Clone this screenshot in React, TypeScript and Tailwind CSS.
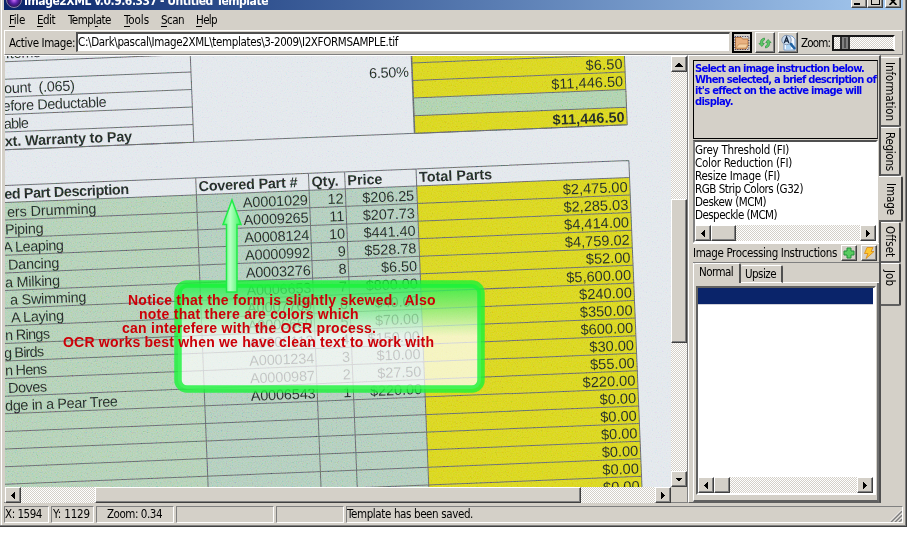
import React, { useLayoutEffect, useRef, useState } from "react";

const RAISED =
  "border border-t-white border-l-white border-r-[#404040] border-b-[#404040] shadow-[inset_-1px_-1px_0_#808080] bg-[#d4d0c8]";
const TRACK =
  "bg-[repeating-conic-gradient(#ffffff_0_25%,#d4d0c8_0_50%)] bg-[length:2px_2px]";

// A label whose letter spacing is fitted to a given length.
function Label({ w, children, className = "", vertical = false }: {
  w: number; children: string; className?: string; vertical?: boolean;
}) {
  const ref = useRef<HTMLSpanElement>(null);
  const [spacing, setSpacing] = useState(0);
  useLayoutEffect(() => {
    const el = ref.current;
    if (!el) return;
    el.style.letterSpacing = "0px";
    const range = document.createRange();
    range.selectNodeContents(el);
    const box = range.getBoundingClientRect();
    const s = (w - (vertical ? box.height : box.width)) / children.length;
    el.style.letterSpacing = s + "px";
    setSpacing(s);
  }, [w, children, vertical]);
  return (
    <span ref={ref} style={{ letterSpacing: spacing }} className={"inline-block shrink-0 whitespace-pre " + className}>
      {children}
    </span>
  );
}

function Arrow({ dir }: { dir: "left" | "right" | "up" | "down" }) {
  const d = { left: "M6 0v7L2 3.5z", right: "M2 0v7L6 3.5z", up: "M0 5.5h8L4 1.5z", down: "M0 1.5h8L4 5.5z" }[dir];
  return (
    <svg width="8" height="7" viewBox="0 0 8 7" shapeRendering="crispEdges">
      <path d={d} fill="#000" />
    </svg>
  );
}

function ScrollButton({ dir }: { dir: "left" | "right" | "up" | "down" }) {
  return (
    <div className={"flex h-4 w-4 shrink-0 items-center justify-center " + RAISED}>
      <Arrow dir={dir} />
    </div>
  );
}

const rows: [string, number, number, string, number, string, string][] = [
  ["ers Drumming", 7, 96.5, "A0001029", 12, "$206.25", "$2,475.00"],
  ["Piping", 5, 43.5, "A0009265", 11, "$207.73", "$2,285.03"],
  ["A Leaping", 3, 64, "A0008124", 10, "$441.40", "$4,414.00"],
  ["Dancing", 8, 59.5, "A0000992", 9, "$528.78", "$4,759.02"],
  ["a Milking", 5, 60, "A0003276", 8, "$6.50", "$52.00"],
  ["a Swimming", 10, 86.5, "A0006653", 7, "$800.00", "$5,600.00"],
  ["A Laying", 11, 64, "A0007769", 6, "$40.00", "$240.00"],
  ["n Rings", 5, 50, "A0006669", 5, "$70.00", "$350.00"],
  ["g Birds", 4, 44, "A0000112", 4, "$150.00", "$600.00"],
  ["n Hens", 5, 47, "A0001234", 3, "$10.00", "$30.00"],
  ["Doves", 8, 47, "A0000987", 2, "$27.50", "$55.00"],
  ["dge in a Pear Tree", 5, 118, "A0006543", 1, "$220.00", "$220.00"],
];
const PITCH = 17.6;
const LINE = "#62666a";

function Scan() {
  const rowLines = Array.from({ length: 19 }, (_, i) => 17 + i * PITCH);
  const upper = [-123.5, -106, -88.5, -71, -53.3, -35.6];
  return (
    <svg width="666" height="431" viewBox="5 56 666 431" className="block font-['Liberation_Sans',Arial,sans-serif]">
      <defs>
        <filter id="grain" x="0" y="0" width="100%" height="100%">
          <feTurbulence type="fractalNoise" baseFrequency="0.8" numOctaves="2" seed="4" />
          <feColorMatrix values="1.8 0 0 0 -0.4  0 1.8 0 0 -0.4  0 0 1.8 0 -0.4  0 0 0 0 1" />
        </filter>
        <linearGradient id="glass" x1="0" y1="0" x2="0" y2="1">
          <stop offset="0" stopColor="#20f048" stopOpacity="0.85" />
          <stop offset="0.2" stopColor="#70f080" stopOpacity="0.75" />
          <stop offset="0.5" stopColor="#ffffff" stopOpacity="0.72" />
          <stop offset="1" stopColor="#ffffff" stopOpacity="0.72" />
        </linearGradient>
        <linearGradient id="shaft" x1="0" y1="0" x2="1" y2="0">
          <stop offset="0" stopColor="#54f870" />
          <stop offset="0.4" stopColor="#b8ffc4" />
          <stop offset="1" stopColor="#38f45c" />
        </linearGradient>
        <filter id="soft"><feGaussianBlur stdDeviation="0.7" /></filter>
      </defs>
      <rect x="5" y="56" width="666" height="431" fill="#e1e6eb" />
      <g transform="translate(195.7 177.8) rotate(-2.3)" fontSize="14.4" fill="#1c2420">
        <rect x="-220" y="17" width="220" height="330" fill="#b0ceb4" />
        <rect x="0" y="17" width="220.5" height="330" fill="#afcbba" />
        <rect x="220.5" y="17" width="213" height="330" fill="#d8d41a" />
        <rect x="220.5" y="-130" width="213" height="94.4" fill="#d8d41a" />
        <rect x="220.5" y="-71" width="213" height="17.7" fill="#abcfaa" />
        <g stroke={LINE} strokeWidth="1">
          {rowLines.map((v) => <path key={v} d={`M-220 ${v}H433.5`} />)}
          <path d="M-220 0H433.5M0 0V340M112.8 0V340M149 0V340M220.5 0V340M433.5 0V340" />
          <path d="M-0.5 -130V-35.6M433.3 -130V-35.6M-220 -35.6H433.3" />
          <path d="M220.5 -130V-35.6" strokeWidth="1.6" />
          {upper.map((v) => <path key={v} d={`M-220 ${v}H-0.5M220.5 ${v}H433.3`} />)}
        </g>
        {rows.map(([name, x0, x1, part, qty, price, total], i) => {
          const v = 31.5 + i * PITCH;
          const u0 = x0 - 195.7 - v * 0.04;
          return (
            <g key={part}>
              <text x={u0} y={v} textLength={x1 - x0}>{name}</text>
              <text x="111.2" y={v} textAnchor="end" textLength="65">{part}</text>
              <text x="147" y={v} textAnchor="end">{qty}</text>
              <text x="217.6" y={v} textAnchor="end">{price}</text>
              <text x="431.2" y={v} textAnchor="end" fontSize="14.6">{total}</text>
            </g>
          );
        })}
        {[12, 13, 14, 15, 16, 17].map((i) => (
          <text key={i} x="431.2" y={31.5 + i * PITCH} textAnchor="end" fontSize="14.6">$0.00</text>
        ))}
        <g fontWeight="bold">
          <text x="-192" y="13.5" textLength="125">ed Part Description</text>
          <text x="2.5" y="13.5" textLength="99">Covered Part #</text>
          <text x="115.5" y="13.5" textLength="27">Qty.</text>
          <text x="151.5" y="13.5" textLength="35">Price</text>
          <text x="223.3" y="13.2" textLength="73">Total Parts</text>
          <text x="-189.3" y="-39.2" textLength="127.500">xt. Warranty to Pay</text>
          <text x="431" y="-38.6" textAnchor="end" textLength="72">$11,446.50</text>
        </g>
        <text x="-185" y="-127" textLength="35">Items</text>
        <text x="-188" y="-92.2" textLength="71" xmlSpace="preserve">ount  (.065)</text>
        <text x="-190" y="-74.6" textLength="104">efore Deductable</text>
        <text x="-189.500" y="-56.700" textLength="25">able</text>
        <text x="217.300" y="-92.500" textAnchor="end" textLength="40">6.50%</text>
        <text x="431" y="-91.800" textAnchor="end" textLength="37">$6.50</text>
        <text x="431" y="-74.300" textAnchor="end" textLength="72">$11,446.50</text>
      </g>
      <rect x="5" y="56" width="666" height="431" filter="url(#grain)" className="mix-blend-soft-light" opacity="0.5" />
      <rect x="178" y="284" width="303" height="105" rx="9" fill="url(#glass)" />
      <rect x="178" y="284" width="303" height="105" rx="9" fill="none" stroke="#18f238" strokeOpacity="0.8" strokeWidth="7.500" filter="url(#soft)" />
      <path d="M232 200L241 224.500H237V292H226.500V224.500H223Z" fill="url(#shaft)" stroke="#20ec48" strokeWidth="1.500" />
      <g fontSize="14" fontWeight="bold" fill="#cc0008">
        <text x="128" y="305" textLength="307.500" xmlSpace="preserve">Notice that the form is slightly skewed.  Also</text>
        <text x="139" y="319" textLength="219.500">note that there are colors which</text>
        <text x="122" y="333" textLength="254">can interefere with the OCR process.</text>
        <text x="63" y="347" textLength="371">OCR works best when we have clean text to work with</text>
      </g>
    </svg>
  );
}

function MenuItem({ text, w, mark, className }: { text: string; w: number; mark: number; className: string }) {
  return (
    <div className={"flex flex-col " + className}>
      <Label w={w}>{text}</Label>
      <svg width={w} height="1" className="-mt-px"><rect x={(mark * w) / text.length} width={mark ? 3 : 6} height="1" /></svg>
    </div>
  );
}

function SideTab({ text, w, className }: { text: string; w: number; className: string }) {
  return (
    <div className={"flex shrink-0 items-start rounded-tr-[2px] rounded-br-[2px] border-t border-t-white border-r-2 border-r-[#404040] border-b-2 border-b-[#606060] " + className}>
      <Label w={w} vertical className="leading-[14px] [writing-mode:vertical-rl]">{text}</Label>
    </div>
  );
}

const SUNK = "border border-t-[#808080] border-l-[#808080] border-r-white border-b-white";

export default function App() {
  return (
    <div className="h-[539px] w-[907px] overflow-hidden bg-white font-['DejaVu_Sans_Condensed','DejaVu_Sans',Tahoma,sans-serif] text-[11.5px] leading-[13px] text-black">
      <div className="flex h-[527px] w-[907px] border-r border-b border-[#404040] bg-[#d4d0c8]">
        <div className="w-full border-r border-b border-[#808080] border-r-[#808080] shadow-[inset_1px_0_0_#d4d0c8,inset_2px_0_0_#fff] pl-1">
          <div className="flex h-[10px] w-[899px] items-start overflow-hidden bg-linear-to-r from-[#0a246a] to-[#a6caf0]">
            <svg width="16" height="16" viewBox="0 0 16 16" className="-mt-[8px] ml-[2px]">
              <defs><radialGradient id="orb"><stop offset="0" stopColor="#d070ff" /><stop offset="0.5" stopColor="#5a20a8" /><stop offset="1" stopColor="#20104c" /></radialGradient></defs>
              <circle cx="8" cy="8" r="7.500" fill="url(#orb)" stroke="#8a80a8" />
            </svg>
            <Label w={244} className="-mt-[5px] ml-[2px] text-[12px] font-bold text-white">Image2XML v.0.9.6.337 - Untitled Template</Label>
            <div className="-mt-[6px] ml-auto mr-[2px] flex">
              <div className={"flex h-[14px] w-4 items-end justify-center pb-[2px] " + RAISED}><div className="mr-1 h-[2px] w-[6px] bg-black" /></div>
              <div className={"mr-[2px] flex h-[14px] w-4 items-end justify-center pb-[2px] " + RAISED}><div className="h-[9px] w-[9px] border border-t-2 border-black" /></div>
              <div className={"flex h-[14px] w-4 items-end justify-center pb-[2px] " + RAISED}>
                <svg width="8" height="7" viewBox="0 0 8 7"><path d="M.5 0l7 7M7.500 0l-7 7" stroke="#000" strokeWidth="1.700" /></svg>
              </div>
            </div>
          </div>
          <div className="flex h-5 pt-1">
            <MenuItem text="File" w={16} mark={0} className="ml-[5px]" />
            <MenuItem text="Edit" w={18} mark={0} className="ml-3" />
            <MenuItem text="Template" w={43} mark={5} className="ml-[13px]" />
            <MenuItem text="Tools" w={25} mark={0} className="ml-[13px]" />
            <MenuItem text="Scan" w={23} mark={0} className="ml-3" />
            <MenuItem text="Help" w={21} mark={0} className="ml-3" />
          </div>
          <div className="flex h-[25px] w-[899px] items-start border-t border-r border-b border-l border-t-white border-r-[#808080] border-b-[#808080] border-l-white">
            <Label w={66} className="mt-[6px] ml-[4px]">Active Image:</Label>
            <div className="ml-[1px] mt-[1px] flex h-5 w-[654px] items-center border-t-2 border-l-2 border-r border-b border-t-[#505050] border-l-[#505050] border-r-[#d4d0c8] border-b-[#d4d0c8] bg-white">
              <Label w={320} className="-mt-px">C:\Dark\pascal\Image2XML\templates\3-2009\I2XFORMSAMPLE.tif</Label>
            </div>
            <div className="ml-[2px] mt-px flex h-[21px] w-5 items-center justify-center border-2 border-black bg-[#d4d0c8]">
              <svg width="16" height="16" viewBox="0 0 16 16">
                <path d="M1.500 2.500h6l1 1.500h5.500v7l-2 3H1.500z" fill="#e8b080" stroke="#b87840" />
                <path d="M2 13l3-4h9l-2 4z" fill="#f4cfa4" stroke="#c08850" strokeWidth=".7" />
                <rect x=".8" y="1.500" width="14" height="13" fill="none" stroke="#302850" strokeDasharray="1 1.500" />
              </svg>
            </div>
            <div className={"ml-[3px] mt-px flex h-[21px] w-5 items-center justify-center " + RAISED}>
              <svg width="14" height="14" viewBox="0 0 14 14" stroke="#238a38" strokeWidth=".6" fill="#5cc866">
                <path d="M6.500 2C3.500 2.500 2 4.500 2.300 7.500H.8L4 10.500l2.300-3H4.800C4.600 5.500 5 4.500 6.500 4z" />
                <path d="M7.500 12c3-.5 4.500-2.500 4.200-5.500h1.500L10 3.500l-2.300 3h1.500c.2 2-.2 3-1.700 3.500z" />
              </svg>
            </div>
            <div className={"ml-[3px] mt-px flex h-[21px] w-5 items-center justify-center " + RAISED}>
              <svg width="17" height="17" viewBox="0 0 17 17">
                <path d="M4 2h8l3 3v11H4z" fill="#f4f8ff" stroke="#78a0d0" />
                <path d="M6 10h7M6 12h7M6 14h5" stroke="#68b0e8" />
                <path d="M10 9l5 6" stroke="#2060a0" strokeWidth="2.600" />
                <circle cx="6.500" cy="6" r="4.700" fill="#c8daf0" fillOpacity=".9" stroke="#8898b0" />
                <path d="M4.300 9l2.300-6 2.200 6M5 7h3.200" stroke="#182840" strokeWidth="1.300" fill="none" />
              </svg>
            </div>
            <Label w={29} className="ml-[3px] mt-[6px]">Zoom:</Label>
            <div className={"ml-[2px] mt-[4px] flex h-4 w-[63px] border-2 border-[#181818] border-r-white border-b-[#181818] " + TRACK}>
              <div className="ml-[6px] flex w-[10px] items-center justify-center border-x-2 border-[#303030] bg-[#808080]"><div className="h-[10px] w-[2px] bg-[#505050]" /></div>
            </div>
          </div>
          <div className="flex h-[448px]">
            <div className="w-[684px] border-t border-r border-b border-t-white border-r-[#808080] border-b-[#808080]">
              <div className="flex h-[431px] pl-px">
                <div className="h-[431px] w-[666px] overflow-hidden"><Scan /></div>
                <div className={"flex w-4 flex-col " + TRACK}>
                  <ScrollButton dir="up" />
                  <div className={"mt-[127px] h-[144px] w-4 " + RAISED} />
                  <div className="mt-auto"><ScrollButton dir="down" /></div>
                </div>
              </div>
              <div className="flex h-4 pl-px">
                <div className={"flex w-[666px] " + TRACK}>
                  <ScrollButton dir="left" />
                  <div className={"ml-[74px] h-4 w-[486px] " + RAISED} />
                  <div className="ml-auto"><ScrollButton dir="right" /></div>
                </div>
              </div>
            </div>
            <div className="flex w-[193px] flex-col border-t border-r-2 border-b border-t-white border-r-[#505050] border-b-[#606060] border-l border-l-white pl-[4px] pt-1">
              <div className="h-[79px] w-[185px] border border-black border-r-[#404040] pl-px pt-[2px] font-['DejaVu_Sans',sans-serif] text-[10px] font-bold leading-[11px] text-[#0000f0]">
                <Label w={169} className="block">Select an image instruction below.</Label>
                <Label w={181} className="block">When selected, a brief description of</Label>
                <Label w={166} className="block">it's effect on the active image will</Label>
                <Label w={38} className="block">display.</Label>
              </div>
              <div className="mt-px flex h-[103px] w-[185px] flex-col border-2 border-t-[#505050] border-l-[#808080] border-r-white border-b-white bg-white">
                <div className="flex flex-1 flex-col items-start pt-[2px]">
                  <Label w={94}>Grey Threshold (FI)</Label>
                  <Label w={97}>Color Reduction (FI)</Label>
                  <Label w={85}>Resize Image (FI)</Label>
                  <Label w={108}>RGB Strip Colors (G32)</Label>
                  <Label w={71}>Deskew (MCM)</Label>
                  <Label w={82}>Despeckle (MCM)</Label>
                </div>
                <div className={"flex h-4 " + TRACK}>
                  <ScrollButton dir="left" />
                  <div className={"h-4 w-[25px] " + RAISED} />
                  <div className="ml-auto"><ScrollButton dir="right" /></div>
                </div>
              </div>
              <div className="flex h-[20px] w-[186px] items-center border-t border-b border-t-white border-b-[#808080]">
                <Label w={144}>Image Processing Instructions</Label>
                <div className={"ml-1 flex h-4 w-4 items-center justify-center " + RAISED}>
                  <svg width="12" height="12" viewBox="0 0 12 12"><path d="M4 1h4v3h3v4H8v3H4V8H1V4h3z" fill="#58cc60" stroke="#209038" /></svg>
                </div>
                <div className={"ml-1 flex h-4 w-4 items-center justify-center " + RAISED}>
                  <svg width="12" height="12" viewBox="0 0 12 12"><path d="M4 .5h6L8 4.500h3L3 11.500l2-5H1.500z" fill="#ffc830" stroke="#d88810" strokeWidth=".8" /></svg>
                </div>
              </div>
              <div className="flex h-[20px] w-[186px] items-end border-l border-white">
                <div className="h-[20px] w-[47px] rounded-t-[2px] border-t border-r-2 border-t-white border-r-[#505050] pl-[5px] pt-[2px]"><Label w={34}>Normal</Label></div>
                <div className="h-[18px] w-[42px] rounded-t-[2px] border-t border-r-2 border-b border-t-white border-r-[#505050] border-b-white pl-[4px] pt-[2px]"><Label w={31}>Upsize</Label></div>
                <div className="h-px flex-1 bg-white" />
              </div>
              <div className="flex w-[186px] flex-1 flex-col border-l border-r-2 border-b-2 border-l-white border-r-[#707070] border-b-[#606060] pl-[2px] pt-[3px]">
                <div className="flex h-[209px] w-[180px] flex-col border-t-2 border-l-2 border-r-2 border-b-2 border-t-[#606060] border-l-[#606060] border-r-white border-b-white bg-white">
                  <div className="mr-px h-[17px] border-b border-[#d0d0d8] bg-[#0a246a]" />
                  <div className="flex-1" />
                  <div className={"mr-px flex h-4 " + TRACK}>
                    <ScrollButton dir="left" />
                    <div className={"h-4 w-4 " + RAISED} />
                    <div className="ml-auto"><ScrollButton dir="right" /></div>
                  </div>
                </div>
              </div>
            </div>
            <div className="flex flex-col pt-[2px]">
              <SideTab text="Information" w={59} className="h-[70px] w-[20px] pt-1 pl-[2px]" />
              <SideTab text="Regions" w={39} className="h-[49px] w-[20px] pt-[4px] pl-[2px]" />
              <SideTab text="Image" w={32} className="-ml-[2px] h-[46px] w-[24px] bg-[#d4d0c8] pl-[5px] pt-[6px]" />
              <SideTab text="Offset" w={31} className="h-[41px] w-[20px] pt-[3px] pl-[2px]" />
              <SideTab text="Job" w={16} className="h-[43px] w-[20px] pt-[6px] pl-[2px]" />
            </div>
          </div>
          <div className="flex h-[22px] pt-[3px]">
            <div className={"h-[17px] w-[45px] pt-px " + SUNK}><Label w={37}>X: 1594</Label></div>
            <div className={"ml-[2px] h-[17px] w-[43px] pl-px pt-px " + SUNK}><Label w={37}>Y: 1129</Label></div>
            <div className={"ml-[2px] h-[17px] w-[78px] pl-[10px] pt-px " + SUNK}><Label w={55}>Zoom: 0.34</Label></div>
            <div className={"ml-[2px] h-[17px] w-[98px] " + SUNK} />
            <div className={"ml-[2px] h-[17px] w-[68px] " + SUNK} />
            <div className={"ml-[2px] flex h-[17px] w-[557px] " + SUNK}>
              <Label w={126} className="pt-px">Template has been saved.</Label>
              <svg width="12" height="12" viewBox="0 0 12 12" className="ml-auto mt-[3px]">
                <path d="M1 12L12 1M5 12l7-7M9 12l3-3" stroke="#808080" strokeWidth="1.600" />
                <path d="M0 11.500L11.500 0M4 11.500L12 3.500M8 11.500l4-4" stroke="#fff" strokeWidth=".8" />
              </svg>
            </div>
          </div>
        </div>
      </div>
    </div>
  );
}
